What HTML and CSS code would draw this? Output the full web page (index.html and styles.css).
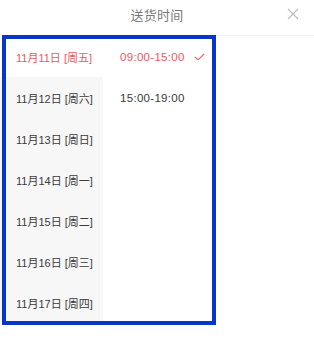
FILE: index.html
```html
<!DOCTYPE html>
<html>
<head>
<meta charset="utf-8">
<link rel="stylesheet" href="styles.css">
</head>
<body>
<div class="panel">
  <div class="header">
    <span class="title">送货时间</span>
    <svg class="close" width="12" height="12" viewBox="0 0 12 12"><path d="M1 1L11 11M11 1L1 11" stroke="#bbb" stroke-width="1.1" fill="none"/></svg>
  </div>
  <div class="body">
    <ul class="days">
      <li class="day active">11月11日 [周五]</li>
      <li class="day">11月12日 [周六]</li>
      <li class="day">11月13日 [周日]</li>
      <li class="day">11月14日 [周一]</li>
      <li class="day">11月15日 [周二]</li>
      <li class="day">11月16日 [周三]</li>
      <li class="day">11月17日 [周四]</li>
    </ul>
    <ul class="times">
      <li class="time active"><span>09:00-15:00</span><svg class="check" width="11" height="8" viewBox="0 0 11 8"><path d="M0.8 4L4 6.8L10.2 0.8" stroke="#f4545f" stroke-width="1.1" fill="none"/></svg></li>
      <li class="time"><span>15:00-19:00</span></li>
    </ul>
  </div>
  <div class="highlight"></div>
</div>
</body>
</html>
```
FILE: styles.css
```css
* { box-sizing: border-box; }
html, body { margin: 0; padding: 0; background: #fff; }
body { font-family: "Liberation Sans", "Noto Sans CJK SC", sans-serif; }
.panel { position: relative; width: 314px; height: 346px; }
.header {
  height: 36px;
  border-bottom: 1px solid #f0f0f0;
  display: flex;
  align-items: center;
  justify-content: center;
  position: relative;
}
.title { font-size: 13px; color: #777; letter-spacing: 0.3px; margin-top: -6px; }
.close { position: absolute; right: 15px; top: 8px; }
.body { display: flex; }
ul { list-style: none; margin: 0; padding: 0; }
.days { width: 103px; background: #f7f7f7; }
.day {
  height: 41px;
  display: flex;
  align-items: center;
  padding-left: 16px;
  font-size: 11px;
  color: #3a3a3a;
  white-space: nowrap;
}
.day.active { background: #fff; color: #f4545f; }
.times { flex: 1; }
.time {
  height: 41px;
  display: flex;
  align-items: center;
  padding-left: 17px;
  font-size: 11.5px;
  letter-spacing: 0.3px;
  color: #3a3a3a;
}
.time.active { color: #f4545f; }
.check { margin-left: 9px; }
.highlight {
  position: absolute;
  left: 2px;
  top: 35px;
  width: 214px;
  height: 290px;
  border: 4px solid #0836c8;
}
```
